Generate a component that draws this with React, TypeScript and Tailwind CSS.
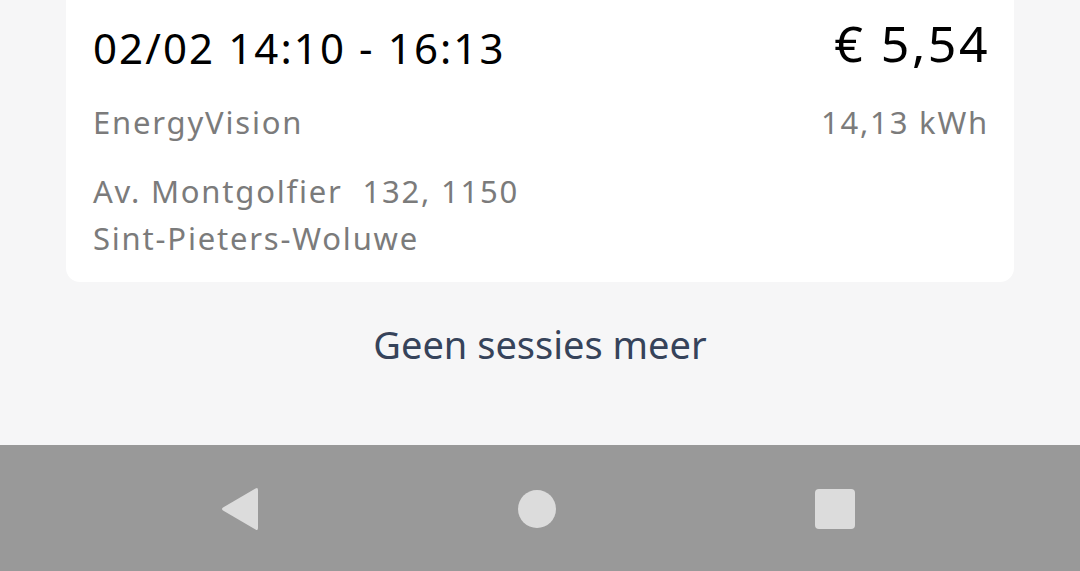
import React from 'react';

const font = { fontFamily: '"Noto Sans", "Open Sans", sans-serif' };

export default function App() {
  return (
    <div className="w-[1080px] h-[571px] flex flex-col bg-[#f6f6f7] overflow-hidden" style={font}>
      <div className="flex-1 flex flex-col">
        <div className="mx-[66px] mt-[-20px] bg-white rounded-[14px] px-[27px] pt-[35px] pb-[20px] flex flex-col">
          <div className="flex justify-between items-end">
            <span className="text-[42px] leading-[56px] text-black tracking-[2.1px]">02/02 14:10 - 16:13</span>
            <span className="text-[50px] leading-[56px] text-black tracking-[2.5px] mr-[-3px] mb-[5px]">€ 5,54</span>
          </div>
          <div className="flex justify-between mt-[26px] text-[31px] leading-[40px] text-[#7b7b7b] tracking-[1.8px]">
            <span>EnergyVision</span>
            <span className="mr-[-2px]">14,13 kWh</span>
          </div>
          <div className="mt-[26px] text-[31px] leading-[47px] text-[#7b7b7b] tracking-[1.8px]">
            <div className="whitespace-pre">Av. Montgolfier  132, 1150</div>
            <div>Sint-Pieters-Woluwe</div>
          </div>
        </div>
        <div className="mt-[37px] text-center text-[38px] leading-[50px] text-[#36435a]">Geen sessies meer</div>
      </div>
      <div className="h-[126px] bg-[#999999] flex items-center justify-center">
        <div className="w-[634px] mr-[4px] flex justify-between items-center mt-[2px]">
          <svg width="38" height="44" viewBox="0 0 38 44">
            <path d="M37 3 L37 41 Q37 44 34.5 42.5 L2 23.5 Q0 22 2 20.5 L34.5 1.5 Q37 0 37 3 Z" fill="#dcdcdc" />
          </svg>
          <div className="w-[38px] h-[38px] rounded-full bg-[#dcdcdc]" />
          <div className="w-[40px] h-[40px] rounded-[4px] bg-[#dcdcdc]" />
        </div>
      </div>
    </div>
  );
}
